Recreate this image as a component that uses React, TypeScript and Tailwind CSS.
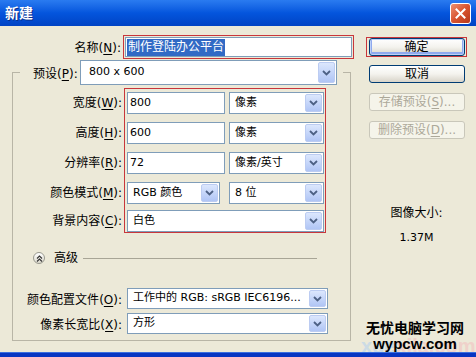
import React from 'react';

const ui = "font-['DejaVu_Sans','Noto_Sans_CJK_SC',sans-serif]";

function DropArrow() {
  return (
    <div className="flex h-full w-[17px] shrink-0 items-center justify-center rounded-[2px] border border-[#BCCCF2] bg-gradient-to-b from-[#DCE7FD] to-[#B0C5F5]">
      <svg width="9" height="6" viewBox="0 0 9 6">
        <path d="M1 1 L4.5 4.5 L8 1" fill="none" stroke="#4D6185" strokeWidth="1.8" />
      </svg>
    </div>
  );
}

function Combo({ value, className = '' }: { value: string; className?: string }) {
  return (
    <div className={`flex items-stretch border border-[#7F9DB9] bg-white p-[1px] ${className}`}>
      <span className="flex flex-1 items-center overflow-hidden whitespace-nowrap pl-[4px] text-[11px] text-black">{value}</span>
      <DropArrow />
    </div>
  );
}

function TextBox({ value }: { value: string }) {
  return (
    <div className="flex h-[22px] w-[98px] items-center border border-[#7F9DB9] bg-white pl-[2px] text-[11px] text-black">
      {value}
    </div>
  );
}

function Label({ text, hot }: { text: string; hot: string }) {
  return (
    <span className="whitespace-nowrap text-[12px] text-black">
      {text}(<span className="underline underline-offset-2">{hot}</span>):
    </span>
  );
}

function XpButton({ children, disabled, primary }: { children: React.ReactNode; disabled?: boolean; primary?: boolean }) {
  const look = disabled
    ? 'border-[#C9C7BA] text-[#ACA899] bg-[#F5F4EA]'
    : 'border-[#003C74] text-black bg-gradient-to-b from-white via-[#F4F3EE] to-[#D8D4C9]';
  const glow = primary ? 'shadow-[inset_0_0_0_1px_#BCD0F8,inset_0_-1px_0_2px_#8FA9EE]' : '';
  return (
    <div className={`flex h-[18px] w-[96px] items-center justify-center rounded-[3px] border text-[12px] ${look} ${glow}`}>
      {children}
    </div>
  );
}

const rows = [
  { label: '宽度', hot: 'W', input: '800', unit: '像素' },
  { label: '高度', hot: 'H', input: '600', unit: '像素' },
  { label: '分辨率', hot: 'R', input: '72', unit: '像素/英寸' },
];

export default function App() {
  return (
    <div className={`relative flex h-[357px] w-[476px] flex-col overflow-hidden bg-[#ECE9D8] ${ui}`}>
      {/* title bar */}
      <div className="flex h-[26px] items-center bg-gradient-to-b from-[#2A7BF0] via-[#0455DD] to-[#0143C4] px-[5px]">
        <span className="text-[14px] font-bold text-white [text-shadow:1px_1px_0_#0A2E8C]">新建</span>
        <div className="ml-auto flex h-[21px] w-[21px] items-center justify-center rounded-[3px] border border-white bg-gradient-to-br from-[#EB8F70] via-[#D8532F] to-[#B6381C]">
          <svg width="11" height="11" viewBox="0 0 11 11">
            <path d="M1.5 1.5 L9.5 9.5 M9.5 1.5 L1.5 9.5" stroke="white" strokeWidth="2" strokeLinecap="square" />
          </svg>
        </div>
      </div>

      <div className="flex flex-1">
        {/* left column */}
        <div className="flex w-[357px] flex-col">
          <div className="mt-[9px] flex h-[24px] items-center">
            <div className="w-[121px] text-right">
              <Label text="名称" hot="N" />
            </div>
            <div className="ml-[2px] flex h-[24px] w-[231px] items-center border border-[#C8363B] p-[1px]">
              <div className="flex h-full w-full items-center border border-[#7F9DB9] bg-white pl-[1px]">
                <span className="bg-[#316AC5] px-[1px] text-[12px] leading-[17px] text-white">制作登陆办公平台</span>
              </div>
            </div>
          </div>

          <fieldset className="mt-[1px] ml-[12px] w-[339px] border border-[#B8B5A6] pb-[6px]">
            <legend className="ml-[7px] w-[323px]">
              <div className="flex h-[25px] items-center bg-[#ECE9D8] pl-[13px]">
                <div className="w-[47px]">
                  <Label text="预设" hot="P" />
                </div>
                <Combo value="800 x 600" className="h-[25px] w-[257px] [&>span]:pl-[7px]" />
              </div>
            </legend>

            <div className="flex pt-[3px]">
              <div className="flex w-[109px] flex-col items-end pt-[4px]">
                {rows.map((r) => (
                  <div key={r.hot} className="mb-[8px] flex h-[22px] items-center">
                    <Label text={r.label} hot={r.hot} />
                  </div>
                ))}
                <div className="mb-[6px] flex h-[22px] items-center">
                  <Label text="颜色模式" hot="M" />
                </div>
                <div className="flex h-[22px] items-center">
                  <Label text="背景内容" hot="C" />
                </div>
              </div>

              <div className="ml-[2px] flex w-[202px] flex-col border border-[#C8363B] pt-[3px] pl-[2px]">
                {rows.map((r) => (
                  <div key={r.hot} className="mb-[8px] flex h-[22px] gap-[4px]">
                    <TextBox value={r.input} />
                    <Combo value={r.unit} className="w-[95px]" />
                  </div>
                ))}
                <div className="mb-[6px] flex h-[22px] gap-[9px]">
                  <Combo value="RGB 颜色" className="w-[93px]" />
                  <Combo value="8 位" className="w-[95px]" />
                </div>
                <Combo value="白色" className="h-[22px] w-[197px]" />
              </div>
            </div>

            <div className="mt-[18px] flex h-[14px] items-center">
              <div className="ml-[20px] flex h-[12px] w-[12px] items-center justify-center rounded-full border border-[#9A9A90] bg-gradient-to-b from-white to-[#DCD9CC]">
                <svg width="7" height="7" viewBox="0 0 7 7">
                  <path d="M1 3.5 L3.5 1 L6 3.5 M1 6.5 L3.5 4 L6 6.5" fill="none" stroke="#333" strokeWidth="1.1" />
                </svg>
              </div>
              <span className="ml-[9px] text-[12px] text-black">高级</span>
              <div className="ml-[5px] h-[1px] w-[234px] bg-[#A8A596]" />
            </div>

            <div className="mt-[23px] flex h-[21px] items-center">
              <div className="w-[109px] text-right">
                <Label text="颜色配置文件" hot="O" />
              </div>
              <Combo value="工作中的 RGB: sRGB IEC6196..." className="ml-[5px] h-[21px] w-[201px]" />
            </div>
            <div className="mt-[4px] flex h-[21px] items-center">
              <div className="w-[109px] text-right">
                <Label text="像素长宽比" hot="X" />
              </div>
              <Combo value="方形" className="ml-[5px] h-[21px] w-[201px]" />
            </div>
          </fieldset>
        </div>

        {/* right column */}
        <div className="ml-[9px] flex w-[101px] flex-col">
          <div className="mt-[11px] flex h-[20px] items-center justify-center border border-[#C8363B]">
            <XpButton primary>确定</XpButton>
          </div>
          <div className="mt-[8px] pl-[3px]">
            <XpButton>取消</XpButton>
          </div>
          <div className="mt-[10px] pl-[3px]">
            <XpButton disabled>
              存储预设(<span className="underline underline-offset-2">S</span>)...
            </XpButton>
          </div>
          <div className="mt-[10px] pl-[3px]">
            <XpButton disabled>
              删除预设(<span className="underline underline-offset-2">D</span>)...
            </XpButton>
          </div>
          <div className="mt-[66px] text-center text-[12px] leading-[16px] text-black">图像大小:</div>
          <div className="mt-[9px] text-center text-[11px] leading-[16px] text-black">1.37M</div>
        </div>
      </div>

      {/* watermark */}
      <div className="absolute top-[336px] left-[361px] whitespace-nowrap font-['Liberation_Sans',sans-serif] text-[20px] leading-none font-bold text-[#B7D3EE] opacity-60">
        xue<span className="text-[#F2C2C2]">xila.com</span>
      </div>
      <div className="absolute top-[321px] left-[366px] flex flex-col items-center whitespace-nowrap">
        <span className="text-[14px] leading-[15px] font-bold text-black">无忧电脑学习网</span>
        <span className="font-['Liberation_Sans',sans-serif] text-[15px] leading-[15px] font-bold text-black">wypcw.com</span>
      </div>

      {/* window bottom frame */}
      <div className="relative z-10 h-[5px] border-t border-[#3A6FE0] bg-[#0836C2]" />
    </div>
  );
}
